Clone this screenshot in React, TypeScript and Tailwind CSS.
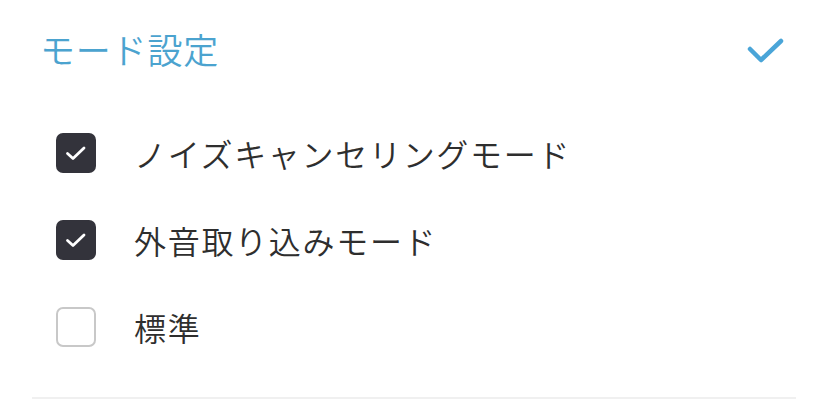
import React from "react";

function Box({ checked }: { checked: boolean }) {
  return checked ? (
    <div className="w-[40px] h-[40px] rounded-[7px] bg-[#33333b] flex items-center justify-center shrink-0">
      <svg width="22" height="18" viewBox="0 0 22 18" fill="none">
        <path d="M2.5 9.5 L8 14.5 L19 4" stroke="white" strokeWidth="2.8" strokeLinecap="round" strokeLinejoin="round" />
      </svg>
    </div>
  ) : (
    <div className="w-[40px] h-[40px] rounded-[7px] border-2 border-[#c8c8c8] bg-white shrink-0" />
  );
}

const items = [
  { label: "ノイズキャンセリングモード", checked: true },
  { label: "外音取り込みモード", checked: true },
  { label: "標準", checked: false },
];

export default function App() {
  return (
    <div
      className="w-[828px] h-[406px] bg-white overflow-hidden"
      style={{ fontFamily: '"Noto Sans CJK JP", "Noto Sans", sans-serif' }}
    >
      <div className="mx-[32px] h-[399px] border-b-2 border-[#f0f0f0] flex flex-col">
        <div className="flex items-center justify-between pl-[8px] pr-[10px] pt-[24px] h-[72px]">
          <div className="text-[35px] leading-none [font-weight:350] text-[#4ba3cf] tracking-[0.8px]">モード設定</div>
          <svg width="40" height="30" viewBox="0 0 40 30" fill="none" className="mt-[6px]">
            <path d="M4 13 L15 24 L35 5" stroke="#4aa5d8" strokeWidth="4.5" strokeLinecap="round" strokeLinejoin="round" />
          </svg>
        </div>
        <div className="flex flex-col pl-[24px] pt-[61px] gap-[47px]">
          {items.map((it) => (
            <div key={it.label} className="flex items-center h-[40px]">
              <Box checked={it.checked} />
              <div className="ml-[38px] text-[32px] leading-none [font-weight:350] text-[#2e2e2e] tracking-[1.7px]">{it.label}</div>
            </div>
          ))}
        </div>
      </div>
    </div>
  );
}
